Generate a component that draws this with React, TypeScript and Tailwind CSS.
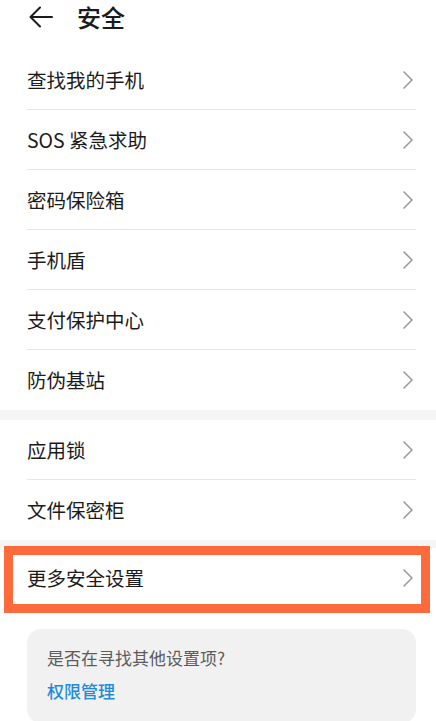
import React from 'react';

const font = { fontFamily: '"Noto Sans CJK SC", "Noto Sans", sans-serif' };

const Chevron: React.FC = () => (
  <svg width="10" height="18" viewBox="0 0 10 18" fill="none" className="shrink-0">
    <path d="M1 1l8 8-8 8" stroke="#9a9a9a" strokeWidth="1.6" strokeLinecap="round" strokeLinejoin="round" />
  </svg>
);

const Row: React.FC<{ label: string; last?: boolean }> = ({ label, last }) => (
  <div className="h-[60px] pl-[27px] pr-[20px] bg-white">
    <div className={`h-full flex items-center justify-between pr-[3px] ${last ? '' : 'border-b border-[#e6e6e6]'}`}>
      <span className="text-[19.5px] text-[#1b1b1b] leading-none">{label}</span>
      <Chevron />
    </div>
  </div>
);

const App: React.FC = () => {
  const groupA = ['查找我的手机', 'SOS 紧急求助', '密码保险箱', '手机盾', '支付保护中心', '防伪基站'];
  const groupB = ['应用锁', '文件保密柜'];

  return (
    <div className="w-[436px] h-[721px] overflow-hidden bg-white" style={font}>
      <header className="h-[50px] flex items-start">
        <div className="h-[34px] flex items-center pl-[29px] gap-[24px]">
          <svg width="24" height="22" viewBox="0 0 24 22" fill="none">
            <path d="M23 11H2M11 1.5L1.5 11l9.5 9.5" stroke="#1b1b1b" strokeWidth="2" strokeLinecap="round" strokeLinejoin="round" />
          </svg>
          <h1 className="text-[24px] font-medium text-[#1b1b1b] leading-none">安全</h1>
        </div>
      </header>

      <section>
        {groupA.map((l, i) => (
          <Row key={l} label={l} last={i === groupA.length - 1} />
        ))}
      </section>

      <div className="h-[10px] bg-[#f5f5f5]" />

      <section>
        {groupB.map((l, i) => (
          <Row key={l} label={l} last={i === groupB.length - 1} />
        ))}
      </section>

      <div className="h-[8px] bg-[#f5f5f5]" />

      <section className="relative">
        <Row label="更多安全设置" last />
        <div className="absolute left-[4px] right-[6px] top-[-2px] h-[67px] border-[9px] border-[#fd6a3c] pointer-events-none" />
      </section>

      <div className="mt-[21px] ml-[27px] mr-[20px] rounded-[14px] bg-[#f1f1f1] px-[20px] pt-[20px] pb-[24px]">
        <p className="text-[17px] text-[#5c5c5c] leading-none">是否在寻找其他设置项?</p>
        <p className="mt-[16px] text-[17px] font-medium text-[#1d8bdc] leading-none">权限管理</p>
      </div>
    </div>
  );
};

export default App;
